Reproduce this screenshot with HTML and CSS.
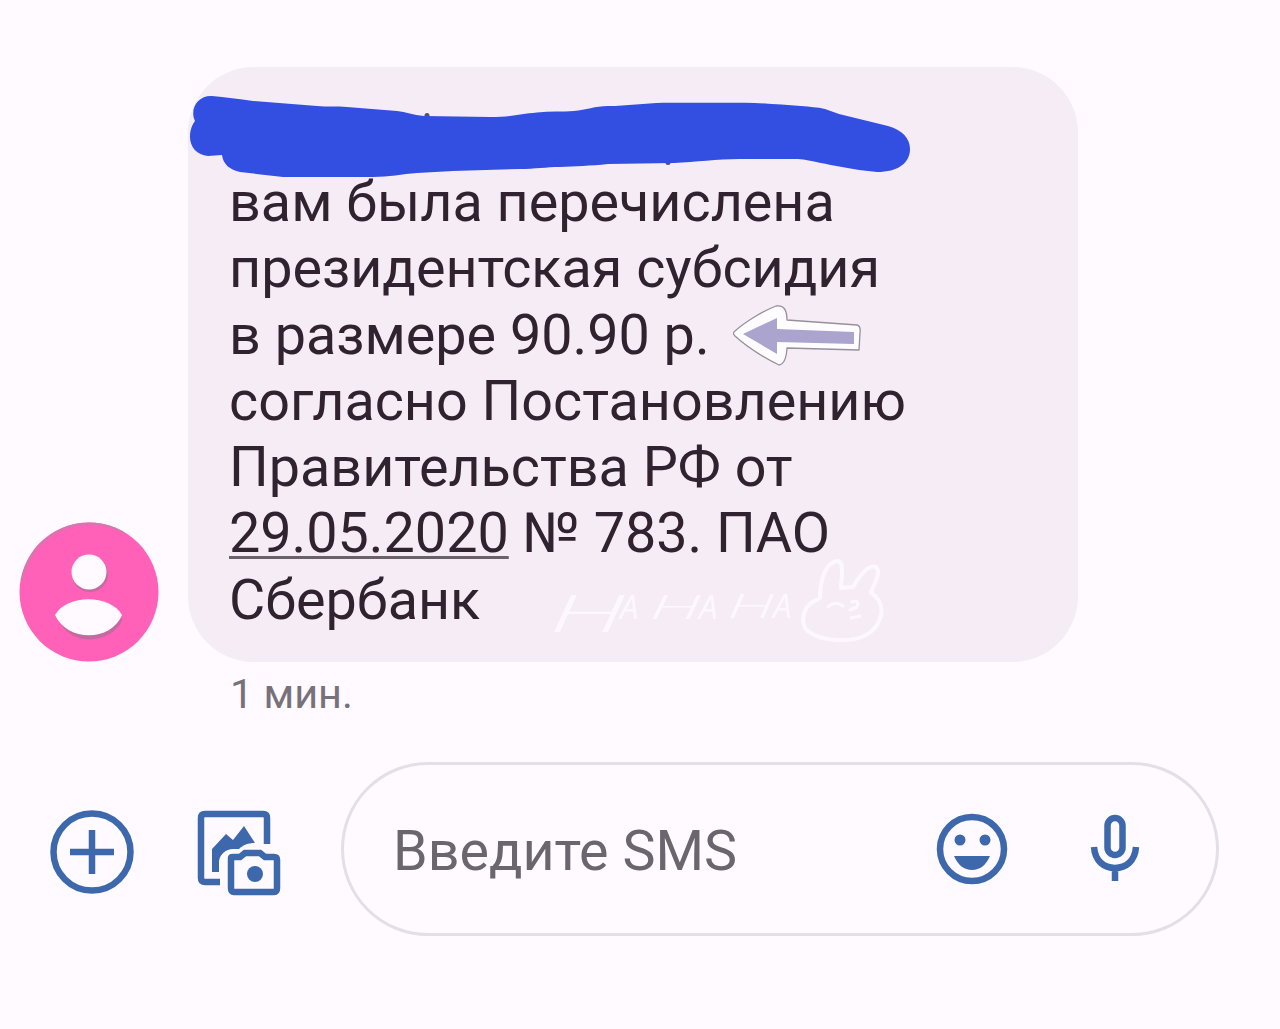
FILE: index.html
```
<!DOCTYPE html>
<html lang="ru">
<head>
  <meta charset="utf-8">
  <title>SMS</title>
  <link rel="stylesheet" href="styles.css">
</head>
<body>
  <div class="chat">
    <div class="message">
      <svg class="avatar" viewBox="0 0 140 140">
        <circle cx="70" cy="70" r="69.500" fill="#ff60b8"/>
        <path d="M3 58A68.500 68.500 0 0 1 105 11" fill="none" stroke="#cf7aab" stroke-width="2"/>
        <circle cx="71" cy="52" r="18" fill="#c56a9f"/>
        <circle cx="70" cy="50" r="17.500" fill="#fefaff"/>
        <path d="M40 98C50 124 92 124 104 97Z" fill="#c56a9f"/>
        <path d="M36 93C48 72 91 72 103 93C92 120 48 120 36 93Z" fill="#fefaff"/>
      </svg>
      <div class="bubble">
        <p class="text">вам была перечислена<br>президентская субсидия<br>в размере 90.90 р.<br>согласно Постановлению<br>Правительства РФ от<br><span class="date">29.05.2020</span> № 783. ПАО<br>Сбербанк</p>
        <!-- marker, arrow and watermark on top of the bubble -->
        <svg class="overlay" viewBox="188 67 890 595">
          <circle cx="427" cy="115.500" r="2.500" fill="#555"/>
          <circle cx="668" cy="162.500" r="2.500" fill="#555"/>
          <path fill="#324fe2" d="M212 96C225 97 239 99 253 101L317 106C327 107 337 106 347 107L397 111C406 112 413 115 424 116L490 117C512 117 520 114 537 112.500C550 111 562 112 574 111C586 110 595 106 608 106C627 106 645 103 663 102.700H745C765 103 782 105 801 106C810 107 817 107 825 109L839 114L888 126C903 130 910 139 910 149C910 163 898 172 877 172C865 171 853 169 842 167C827 165 812 160 798 159H739C717 159 696 162 674 163L608 164C590 166 575 166 560 167C546 167 535 169 520 169L453 171L417 173C402 174 389 177 373 177H283L240 172C230 170 223 164 222 155L208 156C197 155 190 147 190 137C190 130 192 125 195 121C189 108 199 95 212 96Z"/>
          <path fill="#fffcff" stroke="#96909b" stroke-width="1.300" stroke-linejoin="round" d="M735 331C745 322 763 311 776 306Q787 304 787 320L857 325Q861 326 860 333L859 350L787 348Q786 364 779 365C765 358 747 347 735 336Q732 333 735 331Z"/>
          <path fill="#aaa4cf" d="M743 334L777 318V329L854 332V344L777 342V354Z"/>
          <g class="watermark">
            <text x="549" y="632" font-size="52" textLength="76" lengthAdjust="spacingAndGlyphs" class="wide">H</text>
            <text x="620" y="619" font-size="33">A</text>
            <text x="649" y="619" font-size="33" textLength="52" lengthAdjust="spacingAndGlyphs" class="wide">H</text>
            <text x="699" y="619" font-size="33">A</text>
            <text x="727" y="618" font-size="33" textLength="47" lengthAdjust="spacingAndGlyphs" class="wide">H</text>
            <text x="773" y="618" font-size="33">A</text>
          </g>
          <path class="bunny" d="M820 598C820 580 826 561 838 561C845 563 841 578 841 588L853 587C860 575 869 564 876 567C882 573 873 585 871 593C880 598 884 610 880 618C876 633 860 640 845 640C830 641 812 637 805 628C800 617 806 603 817 600"/>
          <path class="bunny face" d="M828 607Q835 600 843 606M852 602Q860 599 857 607L850 610M851 618L860 616"/>
        </svg>
      </div>
    </div>
    <div class="time">1 мин.</div>

    <div class="compose">
      <svg class="plus" viewBox="0 0 86 86">
        <circle cx="43" cy="43" r="38.500"/>
        <path d="M43 21V65M21 43H65"/>
      </svg>
      <svg class="gallery" viewBox="0 0 90 90">
        <path d="M73 37V11Q73 7 69 7H11Q7 7 7 11V71Q7 75 11 75H26"/>
        <path class="solid" d="M18 65V42L32 27L39 33L50 19L61 36C54 36 49 38 45 42H39C32 42 26 47 25 54V65Z"/>
        <path d="M37 51Q37 50 39 50H46L51 46H66L71 50H80Q83 50 83 53V81Q83 85 80 85H40Q37 85 37 81Z"/>
        <circle class="solid" cx="61" cy="67" r="8"/>
      </svg>
      <div class="field">
        <span class="placeholder">Введите SMS</span>
        <svg class="smile" viewBox="0 0 72 72">
          <circle cx="36" cy="36" r="32"/>
          <circle class="solid" cx="24" cy="27" r="5.500"/>
          <circle class="solid" cx="49" cy="27" r="5.500"/>
          <path class="solid" d="M18 43H54C50 52 44 57 36 57S22 52 18 43Z"/>
        </svg>
        <svg class="mic" viewBox="0 0 50 70">
          <rect x="17.500" y="4" width="15" height="37" rx="7.500"/>
          <path d="M4 33C5 47 14 54 25 54S45 47 46 33M25 54V67"/>
        </svg>
      </div>
    </div>
  </div>
</body>
</html>
```
FILE: styles.css
```
body {
  margin: 0;
  background-color: #fefaff;
  font-family: Roboto, sans-serif;
}

.chat {
  box-sizing: border-box;
  height: 1029px;
  padding: 67px 61px 0 19px;
  overflow: hidden;
}

.message {
  display: flex;
  align-items: flex-end;
  gap: 29px;
}

.avatar {
  width: 140px;
  height: 140px;
}

.bubble {
  position: relative;
  box-sizing: border-box;
  width: 890px;
  height: 595px;
  padding: 102px 42px 0 41px;
  border-radius: 66px;
  background-color: #f5ecf6;
  box-shadow: inset 0 0 8px #f1eff4;
}

.text {
  margin: 0;
  font-size: 55.7px;
  line-height: 66.3px;
  white-space: nowrap;
  color: #30232f;
}

.date {
  text-decoration: underline;
  text-decoration-thickness: 3px;
  text-decoration-color: #6b606c;
  text-decoration-skip-ink: none;
  text-underline-offset: 4px;
}

.overlay {
  position: absolute;
  top: 0;
  left: 0;
  width: 890px;
  height: 595px;
  overflow: visible;
}

.watermark {
  fill: #fdf8ff;
  font-family: "Open Sans", sans-serif;
  font-style: italic;
  font-weight: 500;
}

.wide {
  font-weight: 300;
}

.bunny {
  fill: none;
  stroke: #fdf8ff;
  stroke-width: 4;
  stroke-linecap: round;
  stroke-linejoin: round;
}

.face {
  stroke-width: 3;
}

.time {
  margin: 9px 0 0 211px;
  font-size: 41.4px;
  line-height: 46px;
  color: #77717a;
}

.compose {
  display: flex;
  align-items: center;
  margin: 45px 0 0 30px;
}

.compose svg {
  flex: none;
  fill: none;
  stroke: #3d69ac;
  stroke-width: 6.5;
}

.compose .solid {
  fill: #3d69ac;
  stroke: none;
}

.plus {
  width: 86px;
  height: 86px;
  margin-top: 6px;
}

.gallery {
  width: 90px;
  height: 90px;
  margin: 5px 57px 0 59px;
}

.field {
  display: flex;
  align-items: center;
  box-sizing: border-box;
  width: 879px;
  height: 174px;
  padding: 0 76px 0 49px;
  border: 3px solid #e3dee7;
  border-radius: 87px;
}

.placeholder {
  flex: 1;
  padding-top: 3px;
  font-size: 55.6px;
  color: #6b656d;
}

.smile {
  width: 72px;
  height: 72px;
  margin-right: 82px;
}

.mic {
  width: 50px;
  height: 70px;
}
```
